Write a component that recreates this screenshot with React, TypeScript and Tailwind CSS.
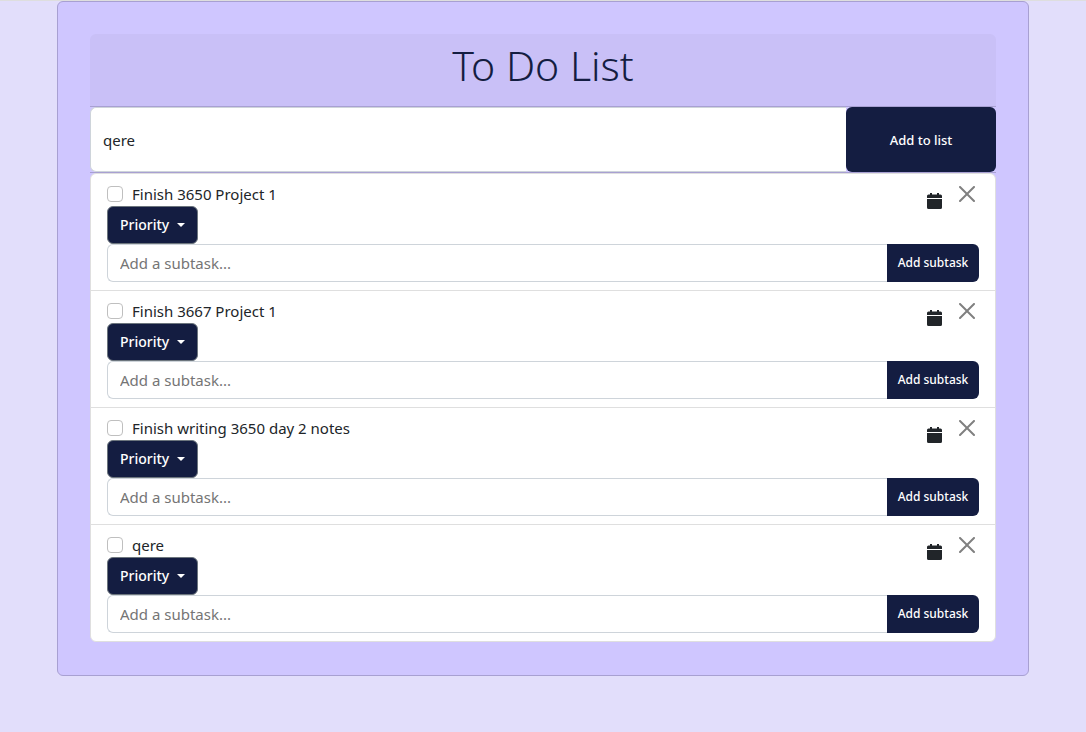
import { useState } from "react";

const initialTasks = [
  "Finish 3650 Project 1",
  "Finish 3667 Project 1",
  "Finish writing 3650 day 2 notes",
  "qere",
];

function CalendarIcon() {
  return (
    <svg width="15" height="16" viewBox="0 0 15 16" fill="currentColor" aria-hidden="true">
      <path d="M3 0h2v1.5h5V0h2v1.5h1.5A1.5 1.5 0 0 1 15 3v2H0V3a1.5 1.5 0 0 1 1.5-1.5H3zM0 6h15v8.5a1.5 1.5 0 0 1-1.5 1.5h-12A1.5 1.5 0 0 1 0 14.5z" />
    </svg>
  );
}

function CloseIcon() {
  return (
    <svg width="16" height="16" viewBox="0 0 16 16" fill="currentColor" aria-hidden="true">
      <path d="M.293.293a1 1 0 0 1 1.414 0L8 6.586 14.293.293a1 1 0 1 1 1.414 1.414L9.414 8l6.293 6.293a1 1 0 0 1-1.414 1.414L8 9.414l-6.293 6.293a1 1 0 0 1-1.414-1.414L6.586 8 .293 1.707a1 1 0 0 1 0-1.414z" />
    </svg>
  );
}

function TaskItem({ title, onRemove }: { title: string; onRemove: () => void }) {
  return (
    <li className="flex flex-col border-b border-[#dfdfdf] px-4 py-2 last:border-b-0">
      <div className="flex items-start justify-between">
        <div>
          <label className="flex h-6 items-center gap-[9px] text-[15px]">
            <input
              type="checkbox"
              className="size-4 appearance-none rounded-sm border border-[#bfbfbf] bg-white checked:bg-[#141d41]"
            />
            {title}
          </label>
          <button
            type="button"
            aria-haspopup="menu"
            className="flex h-[38px] items-center gap-2 rounded-md border border-[#6c757d] bg-[#141d41] px-3 text-sm font-medium text-white"
          >
            Priority
            <svg width="8" height="4" viewBox="0 0 8 4" fill="currentColor" aria-hidden="true">
              <path d="M0 0h8L4 4z" />
            </svg>
          </button>
        </div>
        <div className="flex items-start gap-[17px] pr-1 pt-1">
          <button type="button" aria-label="Pick due date" className="pt-[7px] text-[#212529]">
            <CalendarIcon />
          </button>
          <button type="button" aria-label="Delete task" onClick={onRemove} className="text-[#808080]">
            <CloseIcon />
          </button>
        </div>
      </div>
      <div className="flex h-[38px]">
        <input
          aria-label="Add a subtask"
          placeholder="Add a subtask..."
          className="min-w-0 flex-1 rounded-l-md border border-r-0 border-[#ced4da] bg-white px-3 text-[15px] outline-none placeholder:text-[#757575]"
        />
        <button type="button" className="w-[92px] rounded-r-md bg-[#141d41] text-xs font-medium text-white">
          Add subtask
        </button>
      </div>
    </li>
  );
}

export default function App() {
  const [tasks, setTasks] = useState(initialTasks);
  const [draft, setDraft] = useState("qere");

  return (
    <div className="min-h-screen border-t border-[#dedede] bg-[#e2defb] px-[57px] font-['Noto_Sans',sans-serif] text-[#212529]">
      <main className="rounded-md border border-[#a8a0d2] bg-[#cfc6ff] px-8 pt-8 pb-[33px]">
        <header className="h-[73px] rounded-t-md border-b border-[#a8a0d2] bg-[#c9c0f7] pt-[7px] text-center">
          <h1 className="text-[41px] leading-12 font-light text-[#141d41]">To Do List</h1>
        </header>
        <form
          className="flex h-[66px] border-b border-[#a8a0d2]"
          onSubmit={(e) => {
            e.preventDefault();
            if (draft.trim()) setTasks([...tasks, draft]);
          }}
        >
          <input
            aria-label="New task"
            value={draft}
            onChange={(e) => setDraft(e.target.value)}
            className="min-w-0 flex-1 rounded-l-md border border-r-0 border-[#ced4da] bg-white px-3 pt-[2px] text-[15px] outline-none"
          />
          <button type="submit" className="w-[150px] rounded-md bg-[#141d41] pt-[2px] text-[13px] font-medium text-white">
            Add to list
          </button>
        </form>
        <ul className="rounded-md border border-[#dfdfdf] bg-white">
          {tasks.map((task, i) => (
            <TaskItem key={i} title={task} onRemove={() => setTasks(tasks.filter((_, n) => n !== i))} />
          ))}
        </ul>
      </main>
    </div>
  );
}
